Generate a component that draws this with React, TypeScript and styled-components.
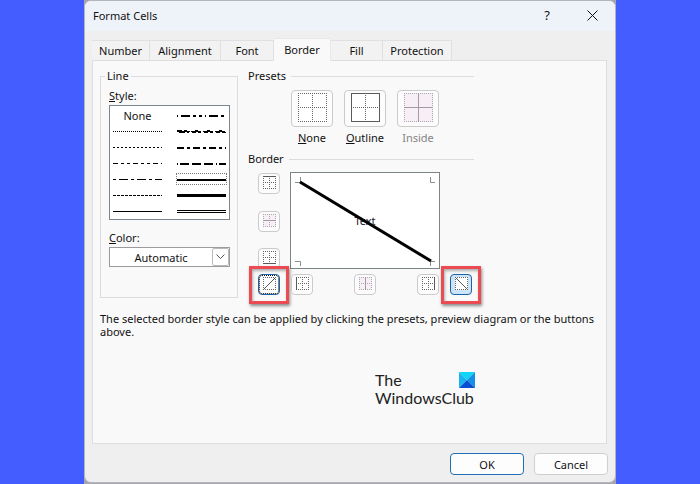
import React, { useId } from "react";
import styled, { createGlobalStyle } from "styled-components";

const GlobalStyle = createGlobalStyle`
  *, *::before, *::after { box-sizing: border-box; }
  body { margin: 0; background: #435dfe; }
  body, button, select {
    font-family: "Noto Sans", "Open Sans", sans-serif;
    font-size: 11px;
    line-height: 13px;
    color: #111;
  }
  button { padding: 0; margin: 0; border: 0; background: none; }
`;

const Desktop = styled.div`
  min-height: 100vh;
  display: flex;
  padding: 0 12%;
`;

const Backdrop = styled.div`
  flex: 1;
  display: flex;
  background: #a6a6ac;
  padding-bottom: 1px;
`;

const Dialog = styled.main`
  flex: 1;
  min-width: 0;
  display: flex;
  flex-direction: column;
  background: #efefef;
  border: 1px solid #b4b5bd;
  border-radius: 7px;
  overflow: hidden;
`;

const TitleBar = styled.header`
  display: flex;
  align-items: center;
  height: 30px;
  padding: 0 11px 2px 8px;
  background: #eef3f9;
`;

const Title = styled.h1`
  flex: 1;
  margin: 0;
  font-size: 11px;
  font-weight: 400;
`;

const CaptionButton = styled.button`
  display: grid;
  place-items: center;
  width: 24px;
  height: 24px;
  margin-left: 21px;
  font-size: 13px;
`;

const Tabs = styled.div`
  display: flex;
  align-items: flex-end;
  height: 29px;
  margin: 0 7px;
`;

const Tab = styled.button<{ $width: number; $active?: boolean }>`
  width: ${(p) => p.$width}px;
  height: ${(p) => (p.$active ? 23 : 20)}px;
  margin-bottom: ${(p) => (p.$active ? -1 : 0)}px;
  padding-bottom: ${(p) => (p.$active ? 1 : 0)}px;
  position: relative;
  background: ${(p) => (p.$active ? "#f9f9f9" : "#f2f2f2")};
  border: 1px solid ${(p) => (p.$active ? "#e8e8e8" : "#e0e0e0")};
  border-width: 1px 1px 0 0;
`;

const Panel = styled.section`
  flex: 1;
  margin: 0 8px 0 7px;
  padding: 7px;
  background: #f9f9f9;
  border: 1px solid #dedede;
`;

const Columns = styled.div`
  display: grid;
  grid-template-columns: 138px minmax(0, 226px);
  gap: 10px;
`;

const LineGroup = styled.fieldset`
  margin: 0;
  min-width: 0;
  padding: 3px 7px 30px 8px;
  border: 1px solid #dcdcdc;
`;

const Legend = styled.legend`
  margin-left: -4px;
  padding: 0 2px;
  line-height: 16px;
`;

const FieldLabel = styled.label`
  display: block;
  margin-bottom: 1px;
  line-height: 17px;
`;

const StyleList = styled.div`
  display: grid;
  grid-template-columns: 1fr 1fr;
  grid-auto-flow: column;
  grid-template-rows: repeat(7, 16px);
  column-gap: 13px;
  height: 115px;
  margin-bottom: 9px;
  padding: 1px 2px 0;
  background: #fff;
  border: 1px solid #7d858f;
`;

const StyleOption = styled.button<{ $selected?: boolean }>`
  display: grid;
  place-items: center;
  height: 12px;
  margin: 2px 0 0;
  outline: ${(p) => (p.$selected ? "1px dotted #777" : "none")};
  outline-offset: -1px;
`;

const SelectBox = styled.div`
  position: relative;
  height: 20px;
  background: #fff;
  border: 1px solid #9a9a9f;
`;

const Select = styled.select`
  display: block;
  appearance: none;
  width: 100%;
  height: 100%;
  padding: 0 17px 0 0;
  border: 0;
  background: transparent;
  text-align: center;
  text-align-last: center;
`;

const Chevron = styled.span`
  position: absolute;
  inset: 0 0 0 auto;
  width: 17px;
  display: grid;
  place-items: center;
  border: 1px solid #b9b9bd;
  border-radius: 2px;
  pointer-events: none;
`;

const Heading = styled.h2`
  display: flex;
  align-items: center;
  gap: 5px;
  margin: 0;
  font-size: 11px;
  font-weight: 400;
  line-height: 16px;
  &::after {
    content: "";
    flex: 1;
    height: 1px;
    background: #dcdcdc;
  }
`;

const Presets = styled.div`
  display: flex;
  justify-content: center;
  gap: 11px;
  padding: 6px 0 5px 8px;
`;

const Preset = styled.button`
  display: grid;
  justify-items: center;
  gap: 3px;
  width: 42px;
  line-height: 16px;
  &:disabled { color: #858585; }
`;

const PresetFace = styled.span`
  display: grid;
  justify-content: center;
  padding-top: 2px;
  width: 42px;
  height: 37px;
  background: #fcfcfc;
  border: 1px solid #cbcbcb;
  border-radius: 4px;
`;

const Editor = styled.div`
  display: grid;
  grid-template-columns: 22px minmax(0, 1fr) 22px;
  grid-template-rows: 97px 21px;
  gap: 5px 10px;
  padding: 5px 2px 0 10px;
`;

const SideButtons = styled.div`
  display: flex;
  flex-direction: column;
  justify-content: space-between;
  padding-top: 1px;
`;

const BottomButtons = styled.div`
  grid-area: 2 / 2;
  display: flex;
  justify-content: space-between;
  padding: 0 1px;
`;

const Corner = styled.div<{ $column: number }>`
  grid-area: 2 / ${(p) => p.$column};
`;

const Preview = styled.div`
  grid-area: 1 / 2;
  display: grid;
  place-items: center;
  background: #fff;
  border: 1px solid #7b8486;
  > * { grid-area: 1 / 1; }
`;

const PreviewText = styled.span`
  color: #1b1430;
`;

const EdgeButton = styled.button<{ $state?: "focused" | "pressed" }>`
  position: relative;
  display: grid;
  justify-content: center;
  padding-top: 2px;
  flex: none;
  width: 22px;
  height: 21px;
  background: ${(p) => (p.$state === "pressed" ? "#cce4f7" : "#fcfcfc")};
  border: 1px solid ${(p) => (p.$state ? "#1c62a8" : "#cbcbcb")};
  border-radius: 4px;
  ${(p) => p.$state === "focused" && "outline: 1px dotted #111; outline-offset: -2px;"}
`;

const Highlight = styled.span`
  position: absolute;
  inset: -9px -10px -10px;
  border: 3px solid #eb4b52;
  box-shadow: 1px 2px 3px rgba(0, 0, 0, 0.45), inset 1px 2px 3px rgba(0, 0, 0, 0.3);
  pointer-events: none;
`;

const Hint = styled.p`
  margin: 14px 0 33px;
`;

const Brand = styled.div`
  display: flex;
  flex-direction: column;
  width: 100px;
  margin-left: 275px;
  font-family: Lato, "Noto Sans", sans-serif;
  font-size: 16px;
  line-height: 18px;
  color: #222;
`;

const BrandRow = styled.span`
  display: flex;
  justify-content: space-between;
  align-items: center;
`;

const Footer = styled.footer`
  display: flex;
  justify-content: flex-end;
  gap: 10px;
  padding: 9px 7px 7px;
`;

const ActionButton = styled.button<{ $primary?: boolean }>`
  width: 74px;
  height: 22px;
  background: #fdfdfd;
  border: 1px solid ${(p) => (p.$primary ? "#1f6fb5" : "#cfcfcf")};
  border-radius: 4px;
`;

type Edge = "top" | "bottom" | "left" | "right" | "midH" | "midV" | "up" | "down";

function GridIcon({ size, solid = [], tint }: { size: number; solid?: Edge[]; tint?: boolean }) {
  const e = size - 0.5;
  const m = Math.floor(size / 2) + 0.5;
  const lines: Record<Edge, string> = {
    top: `M0 .5H${size}`,
    bottom: `M0 ${e}H${size}`,
    left: `M.5 0V${size}`,
    right: `M${e} 0V${size}`,
    midH: `M0 ${m}H${size}`,
    midV: `M${m} 0V${size}`,
    up: `M1 ${size - 1}L${size - 1} 1`,
    down: `M1 1L${size - 1} ${size - 1}`,
  };
  const diagonal = solid.includes("up") || solid.includes("down");
  const base: Edge[] = ["top", "bottom", "left", "right"];
  if (!diagonal) base.push("midH", "midV");
  return (
    <svg width={size} height={size} viewBox={`0 0 ${size} ${size}`} fill="none" aria-hidden="true">
      <rect width={size} height={size} fill={tint ? "#f6f0f6" : "#fff"} />
      {base.filter((k) => !solid.includes(k)).map((k) => (
        <path key={k} d={lines[k]} stroke={tint ? "#b0a6b0" : "#666"} strokeDasharray="1 1" />
      ))}
      {solid.map((k) => (
        <path key={k} d={lines[k]} stroke={tint ? "#a39aa3" : "#5a5a5a"} />
      ))}
    </svg>
  );
}

type Stroke = { name: string; dash?: string; width: number; kind?: "double" | "slanted" };

const strokes: Stroke[] = [
  { name: "Hair", dash: "1 1", width: 1 },
  { name: "Dotted", dash: "2 2", width: 1 },
  { name: "Dash dot dot", dash: "5 3 3 3 3 3", width: 1 },
  { name: "Dash dot", dash: "3 3 9 3", width: 1 },
  { name: "Dashed", dash: "3 1", width: 1 },
  { name: "Thin", width: 1 },
  { name: "Medium dash dot dot", dash: "1 3 9 3 3 3 3 3", width: 2 },
  { name: "Slanted dash dot", width: 2, kind: "slanted" },
  { name: "Medium dash dot", dash: "7 3 3 3", width: 2 },
  { name: "Medium dashed", dash: "1 2 9 3 9 3 9 3", width: 2 },
  { name: "Medium", width: 2 },
  { name: "Thick", width: 3 },
  { name: "Double", width: 1, kind: "double" },
];

function LineSample({ stroke }: { stroke: Stroke }) {
  const y = stroke.width === 2 ? 3 : 2.5;
  return (
    <svg width="49" height="5" viewBox="0 0 49 5" stroke="#000" aria-hidden="true">
      {stroke.kind === "double" ? (
        <path d="M0 1.5H49M0 3.5H49" />
      ) : stroke.kind === "slanted" ? (
        <>
          <path d="M0 1.5H5M7 1.5H10M18 1.5H21M30 1.5H33M42 1.5H45" />
          <path d="M0 2.5H13M14 2.5H24M26 2.5H36M38 2.5H48" />
          <path d="M2 3.5H8M10 3.5H12M15 3.5H19M21 3.5H24M27 3.5H31M33 3.5H36M39 3.5H43M45 3.5H49" />
        </>
      ) : (
        <path d={`M0 ${y}H49`} strokeWidth={stroke.width} strokeDasharray={stroke.dash} />
      )}
    </svg>
  );
}

const tabs = [
  { name: "Number", width: 58 },
  { name: "Alignment", width: 71 },
  { name: "Font", width: 53 },
  { name: "Border", width: 57 },
  { name: "Fill", width: 52 },
  { name: "Protection", width: 69 },
];

export default function App() {
  const colorId = useId();
  const styleId = useId();
  return (
    <>
      <GlobalStyle />
      <Desktop>
        <Backdrop>
          <Dialog>
            <TitleBar>
              <Title>Format Cells</Title>
              <CaptionButton aria-label="Help">?</CaptionButton>
              <CaptionButton aria-label="Close">
                <svg width="11" height="11" viewBox="0 0 11 11" stroke="#111" aria-hidden="true">
                  <path d="M.5 .5l10 10M10.5 .5l-10 10" />
                </svg>
              </CaptionButton>
            </TitleBar>
            <Tabs role="tablist">
              {tabs.map((t) => (
                <Tab
                  key={t.name}
                  role="tab"
                  aria-selected={t.name === "Border"}
                  $width={t.width}
                  $active={t.name === "Border"}
                >
                  {t.name}
                </Tab>
              ))}
            </Tabs>
            <Panel role="tabpanel">
              <Columns>
                <LineGroup>
                  <Legend>Line</Legend>
                  <FieldLabel as="div" id={styleId}><u>S</u>tyle:</FieldLabel>
                  <StyleList role="listbox" aria-labelledby={styleId}>
                    <StyleOption role="option" aria-selected={false}>None</StyleOption>
                    {strokes.map((s) => (
                      <StyleOption
                        key={s.name}
                        role="option"
                        aria-label={s.name}
                        aria-selected={s.name === "Medium"}
                        $selected={s.name === "Medium"}
                      >
                        <LineSample stroke={s} />
                      </StyleOption>
                    ))}
                  </StyleList>
                  <FieldLabel htmlFor={colorId}><u>C</u>olor:</FieldLabel>
                  <SelectBox>
                    <Select id={colorId} defaultValue="Automatic">
                      <option>Automatic</option>
                    </Select>
                    <Chevron>
                      <svg width="9" height="6" viewBox="0 0 9 6" fill="none" stroke="#555" aria-hidden="true">
                        <path d="M.5 .5l4 4 4-4" />
                      </svg>
                    </Chevron>
                  </SelectBox>
                </LineGroup>
                <div>
                  <Heading>Presets</Heading>
                  <Presets>
                    <Preset>
                      <PresetFace><GridIcon size={29} /></PresetFace>
                      <span><u>N</u>one</span>
                    </Preset>
                    <Preset>
                      <PresetFace><GridIcon size={29} solid={["top", "bottom", "left", "right"]} /></PresetFace>
                      <span><u>O</u>utline</span>
                    </Preset>
                    <Preset disabled>
                      <PresetFace><GridIcon size={29} solid={["midH", "midV"]} tint /></PresetFace>
                      <span>Inside</span>
                    </Preset>
                  </Presets>
                  <Heading>Border</Heading>
                  <Editor>
                    <SideButtons>
                      <EdgeButton aria-label="Top border"><GridIcon size={13} solid={["top"]} /></EdgeButton>
                      <EdgeButton aria-label="Inner horizontal border" disabled><GridIcon size={13} solid={["midH"]} tint /></EdgeButton>
                      <EdgeButton aria-label="Bottom border"><GridIcon size={13} solid={["bottom"]} /></EdgeButton>
                    </SideButtons>
                    <Preview>
                      <PreviewText>Text</PreviewText>
                      <svg width="100%" viewBox="0 0 148 95" fill="none" aria-hidden="true">
                        <path d="M4 9.5H9.5V4M139.5 4V9.5H144M4 88.5H9.5V93M144 88.5H139.5V93" stroke="#8a8f90" />
                        <path d="M9 9L140 88" stroke="#000" strokeWidth="3" />
                      </svg>
                    </Preview>
                    <Corner $column={1}>
                      <EdgeButton aria-label="Upward diagonal border" $state="focused">
                        <GridIcon size={13} solid={["up"]} />
                        <Highlight />
                      </EdgeButton>
                    </Corner>
                    <BottomButtons>
                      <EdgeButton aria-label="Left border"><GridIcon size={13} solid={["left"]} /></EdgeButton>
                      <EdgeButton aria-label="Inner vertical border" disabled><GridIcon size={13} solid={["midV"]} tint /></EdgeButton>
                      <EdgeButton aria-label="Right border"><GridIcon size={13} solid={["right"]} /></EdgeButton>
                    </BottomButtons>
                    <Corner $column={3}>
                      <EdgeButton aria-label="Downward diagonal border" aria-pressed="true" $state="pressed">
                        <GridIcon size={13} solid={["down"]} />
                        <Highlight />
                      </EdgeButton>
                    </Corner>
                  </Editor>
                </div>
              </Columns>
              <Hint>
                The selected border style can be applied by clicking the presets, preview diagram or the buttons above.
              </Hint>
              <Brand>
                <BrandRow>
                  The
                  <svg width="16" height="16" viewBox="0 0 16 16" aria-hidden="true">
                    <path d="M0 0H16L8 8Z" fill="#10d5f5" />
                    <path d="M0 0L8 8L0 16Z" fill="#18b4ee" />
                    <path d="M16 0L8 8L16 16Z" fill="#1590e8" />
                    <path d="M0 16L8 8L16 16Z" fill="#0a4fd0" />
                  </svg>
                </BrandRow>
                <span>WindowsClub</span>
              </Brand>
            </Panel>
            <Footer>
              <ActionButton $primary>OK</ActionButton>
              <ActionButton>Cancel</ActionButton>
            </Footer>
          </Dialog>
        </Backdrop>
      </Desktop>
    </>
  );
}
